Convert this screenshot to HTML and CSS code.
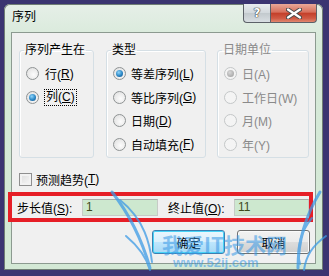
FILE: index.html
```html
<!DOCTYPE html>
<html lang="zh-CN">
<head>
    <meta charset="UTF-8">
    <title>序列</title>
    <link rel="stylesheet" href="styles.css">
</head>
<body>
    <div class="window">
        <div class="titlebar">
            <span class="title">序列</span>
            <div class="caption">
                <span class="cap help">?</span>
                <span class="cap close">
                    <svg width="16" height="11" viewBox="0 0 16 11">
                        <path d="M2 1.5 L14 9.5 M14 1.5 L2 9.5" stroke="#4a4a4a" stroke-width="4.2" stroke-linecap="round"/>
                        <path d="M2 1.5 L14 9.5 M14 1.5 L2 9.5" stroke="#fff" stroke-width="2.2" stroke-linecap="round"/>
                    </svg>
                </span>
            </div>
        </div>
        <div class="client">
            <div class="groups">
                <fieldset class="group g1">
                    <legend>序列产生在</legend>
                    <div class="opt"><span class="radio"></span>行(<u>R</u>)</div>
                    <div class="opt"><span class="radio on"></span><span class="focus">列(<u>C</u>)</span></div>
                </fieldset>
                <fieldset class="group g2">
                    <legend>类型</legend>
                    <div class="opt"><span class="radio on"></span>等差序列(<u>L</u>)</div>
                    <div class="opt"><span class="radio"></span>等比序列(<u>G</u>)</div>
                    <div class="opt"><span class="radio"></span>日期(<u>D</u>)</div>
                    <div class="opt"><span class="radio"></span>自动填充(<u>F</u>)</div>
                </fieldset>
                <fieldset class="group g3 disabled">
                    <legend>日期单位</legend>
                    <div class="opt"><span class="radio on"></span>日(A)</div>
                    <div class="opt"><span class="radio"></span>工作日(W)</div>
                    <div class="opt"><span class="radio"></span>月(M)</div>
                    <div class="opt"><span class="radio"></span>年(Y)</div>
                </fieldset>
            </div>
            <div class="check"><span class="box"></span>预测趋势(<u>T</u>)</div>
            <div class="values">
                <span class="lbl">步长值(<u>S</u>):</span>
                <span class="input first">1</span>
                <span class="lbl second">终止值(<u>O</u>):</span>
                <span class="input">11</span>
            </div>
            <div class="buttons">
                <span class="btn default">确定</span>
                <span class="btn">取消</span>
            </div>
        </div>
    </div>

    <!-- 标注框 -->
    <div class="mark"></div>

    <!-- 水印 -->
    <div class="watermark">
        <svg width="329" height="276" viewBox="0 0 329 276">
            <g fill="none" stroke="#3d9be6" stroke-linecap="round">
                <path d="M112 192 C 130 215, 142 240, 150 268" stroke-width="3"/>
                <path d="M120 200 C 145 220, 150 245, 152 262" stroke-width="2"/>
                <path d="M126 236 C 138 246, 146 256, 150 270" stroke-width="2"/>
                <path d="M320 192 C 306 215, 298 240, 298 268" stroke-width="3"/>
                <path d="M312 218 C 300 232, 296 250, 300 264" stroke-width="2"/>
                <path d="M326 236 C 312 246, 306 256, 304 270" stroke-width="2"/>
            </g>
            <text x="162" y="253" class="wm-big">我爱IT技术网</text>
            <text x="173" y="267" class="wm-small">www.52ij.com</text>
        </svg>
    </div>
</body>
</html>
```

FILE: styles.css
```css
body {
    margin: 0;
    width: 329px;
    height: 276px;
    padding: 4px 6px 6px 4px;
    box-sizing: border-box;
    background: #3b3471;
    font-family: "Liberation Sans", "Noto Sans CJK SC", sans-serif;
    font-size: 12px;
    color: #000;
    overflow: hidden;
}
.window {
    height: 266px;
    background: linear-gradient(180deg, #e6efe8, #d6e9d8 40px, #d3e8d5);
    border-radius: 6px 6px 0 0;
    padding: 0 7px 6px 7px;
    box-sizing: border-box;
    box-shadow: inset 0 0 0 1px #6f7d74;
}
.titlebar {
    height: 28px;
    display: flex;
    justify-content: space-between;
    align-items: flex-start;
}
.title {
    padding: 6px 0 0 1px;
    line-height: 14px;
    font-size: 12px;
}
.caption {
    display: flex;
    margin-right: -1px;
}
.cap {
    height: 19px;
    box-sizing: border-box;
    display: flex;
    justify-content: center;
    align-items: center;
    border: 1px solid #5c6168;
    border-top: none;
}
.help {
    width: 27px;
    border-radius: 0 0 0 4px;
    border-right: none;
    background: linear-gradient(180deg, #e8ecef, #d2d8dc 50%, #c2c9cd 51%, #d8dee2);
    font-family: "DejaVu Sans", sans-serif;
    font-weight: bold;
    font-size: 12px;
    color: #fff;
    text-shadow: 0 0 1px #333, 0 0 1px #333, 0 0 1px #333;
}
.close {
    width: 47px;
    border-radius: 0 0 4px 0;
    background: linear-gradient(180deg, #e9a898, #d7705c 45%, #c4402a 52%, #d05a44 80%, #e08870);
}
.client {
    height: 232px;
    background: #f0f0f0;
    border: 1px solid #8c9a90;
    box-sizing: border-box;
    padding: 0 5px 0 7px;
}
.groups {
    display: flex;
    margin-top: 10px;
}
.group {
    margin: 0;
    padding: 5px 0 0 0;
    border: 1px solid #d5dfe5;
    border-radius: 3px;
    height: 115px;
    box-sizing: border-box;
    box-shadow: inset 1px 1px 0 #fff;
}
.group legend {
    padding: 0 1px;
    margin-left: 4px;
    line-height: 14px;
}
.g1 { width: 75px; }
.g2 { width: 100px; margin-left: 12px; }
.g3 { width: 92px; margin-left: 11px; }
.opt {
    height: 23.5px;
    display: flex;
    align-items: center;
    padding-left: 6px;
    white-space: nowrap;
}
.radio {
    width: 13px;
    height: 13px;
    box-sizing: border-box;
    border-radius: 50%;
    border: 1px solid #8f9394;
    background: radial-gradient(circle at 60% 60%, #fcfcfc, #dcdcdc);
    margin-right: 5px;
    position: relative;
    flex: none;
}
.radio.on::after {
    content: "";
    position: absolute;
    left: 2px;
    top: 2px;
    width: 7px;
    height: 7px;
    border-radius: 50%;
    background: radial-gradient(circle at 40% 35%, #8fd5fb, #2a86c4 55%, #0f4a80);
}
.g1 .opt:first-of-type { margin-top: 0; }
.g1 .opt .radio { margin-right: 6px; }
.focus {
    outline: 1px dotted #000;
    outline-offset: 0;
    padding: 0 1px;
    line-height: 15px;
}
.disabled,
.disabled legend { color: #8a8a8a; }
.disabled .radio {
    border-color: #c4c7c8;
    background: #f4f4f4;
}
.disabled .radio.on::after {
    background: radial-gradient(circle at 40% 35%, #d8d8d8, #9a9a9a);
}
.check {
    display: flex;
    align-items: center;
    height: 16px;
    margin-top: 13px;
}
.box {
    width: 13px;
    height: 13px;
    box-sizing: border-box;
    border: 1px solid #8f8f8f;
    background: linear-gradient(135deg, #dcdcdc, #f8f8f8);
    box-shadow: inset 0 0 0 2px #f2f2f2;
    margin-right: 4px;
}
.values {
    display: flex;
    align-items: center;
    margin-top: 12px;
    margin-left: -2px;
}
.lbl {
    width: 65px;
    white-space: nowrap;
}
.lbl.second {
    width: 66px;
    margin-left: 10px;
}
.input {
    width: 76px;
    height: 17px;
    box-sizing: border-box;
    border: 1px solid #c6cbc6;
    border-top-color: #a8aca8;
    background: #cde8cf;
    padding-left: 3px;
    line-height: 15px;
    color: #3e4a1c;
}
.input.first { margin-right: 0; }
.values .input:last-child { width: 75px; }
.buttons {
    display: flex;
    justify-content: flex-end;
    gap: 12px;
    margin-top: 14px;
}
.btn {
    width: 73px;
    height: 24px;
    box-sizing: border-box;
    border: 1px solid #707070;
    border-radius: 3px;
    background: linear-gradient(180deg, #f2f2f2, #ebebeb 50%, #dddddd 51%, #cfcfcf);
    display: flex;
    justify-content: center;
    align-items: center;
    box-shadow: inset 0 0 0 1px #fafafa;
}
.btn.default {
    border-color: #3c7fb1;
    box-shadow: inset 0 0 0 1px #48d4f8;
    background: linear-gradient(180deg, #eaf6fd, #d9f0fc 50%, #bee6fd 51%, #a7d9f5);
}
.mark {
    position: absolute;
    left: 8px;
    top: 192px;
    width: 305px;
    height: 30px;
    box-sizing: border-box;
    border: 4px solid #e61e26;
}
.watermark {
    position: absolute;
    left: 0;
    top: 0;
    opacity: 0.75;
    pointer-events: none;
}
.wm-big {
    font-family: "Noto Sans CJK SC", sans-serif;
    font-weight: bold;
    font-size: 21px;
    fill: #3d9be6;
    fill-opacity: 0.75;
}
.wm-small {
    font-family: "Liberation Sans", sans-serif;
    font-weight: bold;
    font-size: 13px;
    fill: #3d9be6;
    fill-opacity: 0.75;
}
```
